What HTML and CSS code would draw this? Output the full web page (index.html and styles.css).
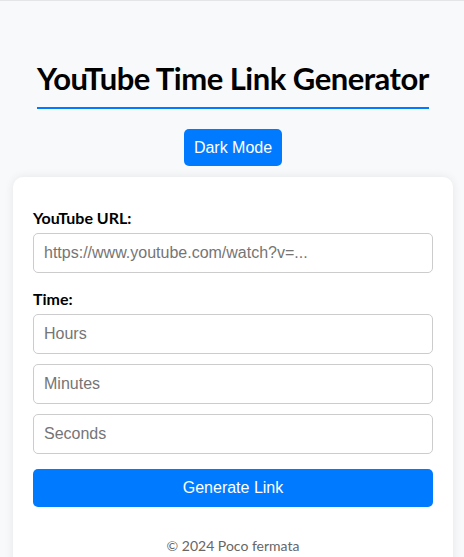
FILE: index.html
```html
<!DOCTYPE html>
<html lang="en">
<head>
<meta charset="utf-8">
<title>YouTube Time Link Generator</title>
<link rel="stylesheet" href="styles.css">
</head>
<body>
<div class="page">
  <header class="header">
    <h1 class="title">YouTube Time Link Generator</h1>
    <button class="btn btn-toggle" type="button">Dark Mode</button>
  </header>
  <main class="card">
    <div class="group">
      <label class="label" for="url">YouTube URL:</label>
      <input class="input" id="url" type="text" placeholder="https://www.youtube.com/watch?v=...">
    </div>
    <div class="group">
      <label class="label" for="hours">Time:</label>
      <div class="time-fields">
        <input class="input" id="hours" type="number" placeholder="Hours">
        <input class="input" id="minutes" type="number" placeholder="Minutes">
        <input class="input" id="seconds" type="number" placeholder="Seconds">
      </div>
    </div>
    <button class="btn btn-generate" type="button">Generate Link</button>
    <footer class="footer">© 2024 Poco fermata</footer>
  </main>
</div>
</body>
</html>
```

FILE: styles.css
```css
* { box-sizing: border-box; }

html, body {
  margin: 0;
  padding: 0;
}

body {
  background: #f8f9fa;
  border-top: 1px solid #e4e5e7;
  font-family: Lato, "Noto Sans", sans-serif;
  color: #000;
}

.page {
  padding: 55px 11px 0 13px;
  display: flex;
  flex-direction: column;
}

.header {
  display: flex;
  flex-direction: column;
  align-items: center;
}

.title {
  margin: 0;
  font-size: 31px;
  letter-spacing: -0.5px;
  line-height: 43px;
  font-weight: 700;
  white-space: nowrap;
  padding: 1px 0 7px;
  border-bottom: 2px solid #007bff;
}

.btn {
  font-family: "Liberation Sans", Arial, sans-serif;
  font-size: 16px;
  line-height: 18px;
  color: #fff;
  background: #007bff;
  border: none;
  border-radius: 5px;
  cursor: pointer;
}

.btn-toggle {
  margin-top: 20px;
  padding: 10px 10px 9px;
}

.card {
  margin-top: 11px;
  background: #fff;
  border-radius: 10px;
  box-shadow: 0 0 10px rgba(0, 0, 0, 0.08);
  padding: 30px 20px 40px;
  display: flex;
  flex-direction: column;
}

.group {
  display: flex;
  flex-direction: column;
  margin-bottom: 15px;
}

.label {
  font-size: 16px;
  line-height: 21px;
  font-weight: 700;
  margin-bottom: 5px;
}

.time-fields {
  display: flex;
  flex-direction: column;
  gap: 10px;
}

.input {
  width: 100%;
  height: 40px;
  padding: 10px;
  font-family: "Liberation Sans", Arial, sans-serif;
  font-size: 16px;
  line-height: 18px;
  border: 1px solid #ccc;
  border-radius: 5px;
  color: #000;
  background: #fff;
  -moz-appearance: textfield;
}

.input::placeholder { color: #757575; }

.input::-webkit-outer-spin-button,
.input::-webkit-inner-spin-button {
  -webkit-appearance: none;
  margin: 0;
}

.btn-generate {
  width: 100%;
  height: 38px;
  padding: 10px;
}

.footer {
  margin-top: 29px;
  text-align: center;
  font-size: 14px;
  line-height: 19px;
  color: #666;
}
```
